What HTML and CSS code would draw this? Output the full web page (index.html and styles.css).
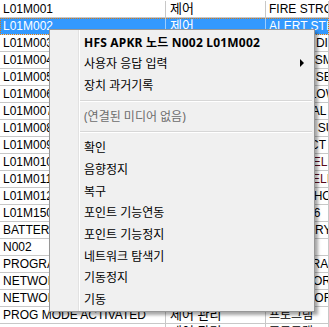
FILE: index.html
```html
<!DOCTYPE html>
<html lang="ko">
<head>
    <meta charset="UTF-8">
    <meta name="viewport" content="width=device-width, initial-scale=1.0">
    <title>포인트 목록</title>
    <link rel="stylesheet" href="styles.css">
</head>
<body>

    <div class="grid">
        <div class="row"><div class="cell c1">L01M001</div><div class="cell c2">제어</div><div class="cell c3">FIRE STROBE</div></div>
        <div class="row selected"><div class="cell c1">L01M002</div><div class="cell c2">제어</div><div class="cell c3">ALERT STROBE</div></div>
        <div class="row"><div class="cell c1">L01M003</div><div class="cell c2">감시</div><div class="cell c3">SIGNAL DISABLE</div></div>
        <div class="row"><div class="cell c1">L01M004</div><div class="cell c2">감시</div><div class="cell c3">PHOTO SMOKE</div></div>
        <div class="row"><div class="cell c1">L01M005</div><div class="cell c2">감시</div><div class="cell c3">SMOKE SENSOR</div></div>
        <div class="row"><div class="cell c1">L01M006</div><div class="cell c2">감시</div><div class="cell c3">HIGH FLOW</div></div>
        <div class="row"><div class="cell c1">L01M007</div><div class="cell c2">감시</div><div class="cell c3">THERMAL</div></div>
        <div class="row"><div class="cell c1">L01M008</div><div class="cell c2">감시</div><div class="cell c3">POWER SUPPLY</div></div>
        <div class="row"><div class="cell c1">L01M009</div><div class="cell c2">감시</div><div class="cell c3">CONTACT</div></div>
        <div class="row"><div class="cell c1">L01M010</div><div class="cell c2">제어</div><div class="cell c3 warn">VENT RELIEF</div></div>
        <div class="row"><div class="cell c1">L01M011</div><div class="cell c2">제어</div><div class="cell c3 warn">TANK RELIEF</div></div>
        <div class="row"><div class="cell c1">L01M012</div><div class="cell c2">제어</div><div class="cell c3">ALARM HORN</div></div>
        <div class="row"><div class="cell c1">L01M150</div><div class="cell c2">제어</div><div class="cell c3">FLOOR 6</div></div>
        <div class="row"><div class="cell c1">BATTERY LOW</div><div class="cell c2">전원</div><div class="cell c3">AUXILIARY</div></div>
        <div class="row"><div class="cell c1">N002</div><div class="cell c2">노드</div><div class="cell c3"></div></div>
        <div class="row"><div class="cell c1">PROGRAM MODE</div><div class="cell c2">제어 관리</div><div class="cell c3">SYS PARAM</div></div>
        <div class="row"><div class="cell c1">NETWORK FAULT</div><div class="cell c2">네트워크</div><div class="cell c3">TX ERROR</div></div>
        <div class="row"><div class="cell c1">NETWORK FAULT</div><div class="cell c2">네트워크</div><div class="cell c3">RX ERROR</div></div>
        <div class="row"><div class="cell c1">PROG MODE ACTIVATED</div><div class="cell c2">제어 관리</div><div class="cell c3">프로그램</div></div>
        <div class="row"><div class="cell c1">PROG MODE EXIT</div><div class="cell c2">제어 관리</div><div class="cell c3">프로그램</div></div>
    </div>

    <div class="menu">
        <div class="item title">HFS APKR 노드 N002 L01M002</div>
        <div class="item has-sub">사용자 응답 입력<span class="arrow"></span></div>
        <div class="item">장치 과거기록</div>
        <div class="sep"></div>
        <div class="item disabled">(연결된 미디어 없음)</div>
        <div class="sep"></div>
        <div class="item">확인</div>
        <div class="item">음향정지</div>
        <div class="item">복구</div>
        <div class="item">포인트 기능연동</div>
        <div class="item">포인트 기능정지</div>
        <div class="item">네트워크 탐색기</div>
        <div class="item">기동정지</div>
        <div class="item">기동</div>
    </div>

</body>
</html>
```

FILE: styles.css
```css
body {
    margin: 0;
    background-color: #fff;
    font-family: "Liberation Sans", "Noto Sans CJK KR", sans-serif;
    font-size: 12px;
    color: #000;
    overflow: hidden;
}

.grid {
    padding-top: 1px;
}

.row {
    display: grid;
    grid-template-columns: 166px 100px 1fr;
    height: 17px;
}

.cell {
    white-space: nowrap;
    overflow: hidden;
    line-height: 16px;
    padding-left: 3px;
    border-bottom: 1px solid #c8c8c8;
    border-right: 1px solid #c8c8c8;
}

.c2 {
    padding-left: 4px;
    font-size: 13px;
}

.warn {
    color: #5a0818;
}

.row.selected {
    background-color: #3399ff;
    color: #fff;
    outline: 1px dotted #d97a10;
    outline-offset: -1px;
}

.row.selected .cell {
    border-color: #9ccdff;
}

.menu {
    position: absolute;
    left: 49px;
    top: 29px;
    width: 264px;
    padding: 1px 0;
    border: 1px solid #979797;
    background: linear-gradient(to right, #f0f0f0 28px, #e2e2e2 28px 29px, #fff 29px 30px, #f0f0f0 30px);
    box-shadow: 3px 3px 3px rgba(0, 0, 0, 0.35);
    font-family: "Noto Sans", "Noto Sans CJK KR", sans-serif;
    font-size: 12px;
}

.item {
    display: flex;
    align-items: center;
    height: 21.66px;
    padding-left: 34px;
    white-space: nowrap;
}

.item.title {
    font-weight: bold;
    letter-spacing: 0.2px;
}

.item.disabled {
    color: #6d6d6d;
}

.arrow {
    margin-left: auto;
    margin-right: 10px;
    border-left: 4px solid #000;
    border-top: 4px solid transparent;
    border-bottom: 4px solid transparent;
}

.sep {
    height: 9.4px;
    margin: 0 2px 0 30px;
    display: flex;
    align-items: center;
}

.sep::before {
    content: "";
    flex: 1;
    height: 1px;
    background-color: #d7d7d7;
    border-bottom: 1px solid #fff;
}
```
